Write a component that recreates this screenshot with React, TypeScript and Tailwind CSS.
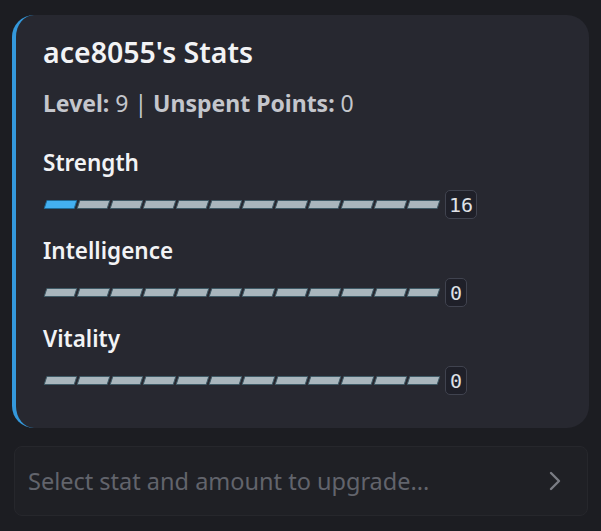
import { ChevronRight } from 'lucide-react';

interface Stat {
  name: string;
  value: number;
  filled: number;
}

const stats: Stat[] = [
  { name: 'Strength', value: 16, filled: 1 },
  { name: 'Intelligence', value: 0, filled: 0 },
  { name: 'Vitality', value: 0, filled: 0 },
];

// 12セグメントのバー
function StatBar({ filled }: { filled: number }) {
  return (
    <div className="flex gap-[2px] pl-[2px]">
      {Array.from({ length: 12 }).map((_, i) => (
        <div
          key={i}
          className={
            i < filled
              ? 'w-[31px] h-[9px] -skew-x-[18deg] rounded-[1px] border border-[#1f6a96] bg-[#43b0f1]'
              : 'w-[31px] h-[9px] -skew-x-[18deg] rounded-[1px] border border-[#3f5a66] bg-[#a9b6bd]'
          }
        />
      ))}
    </div>
  );
}

export default function App() {
  return (
    <div
      className="w-[601px] h-[531px] bg-[#1c1d22] pt-[15px] px-[12px]"
      style={{ fontFamily: '"Noto Sans", "Open Sans", sans-serif' }}
    >
      {/* 埋め込みカード */}
      <div className="w-[577px] h-[413px] rounded-[22px] border-l-[4px] border-[#3498db] bg-[#272830] pl-[27px] pt-[19px]">
        <h1 className="text-[28.5px] font-semibold leading-[36px] text-[#f2f3f5]">ace8055's Stats</h1>
        <p className="mt-[18px] text-[23px] leading-[30px] text-[#c4c6cc]">
          <span className="font-bold">Level:</span> 9 | <span className="font-bold">Unspent Points:</span> 0
        </p>
        <div className="mt-[30px] flex flex-col gap-[17px]">
          {stats.map((stat) => (
            <div key={stat.name}>
              <div className="text-[22.5px] font-semibold leading-[30px] text-[#f2f3f5]">{stat.name}</div>
              <div className="mt-[12px] flex h-[29px] items-center gap-[6px]">
                <StatBar filled={stat.filled} />
                <span
                  className="flex h-[29px] min-w-[22px] items-center justify-center rounded-[5px] border border-[#40434f] bg-[#1f2029] px-[3px] text-[20px] text-[#dfe1e6]"
                  style={{ fontFamily: '"DejaVu Sans Mono", monospace' }}
                >
                  {stat.value}
                </span>
              </div>
            </div>
          ))}
        </div>
      </div>

      {/* セレクトメニュー */}
      <div className="mt-[18px] ml-[2px] flex h-[70px] w-[574px] items-center justify-between rounded-[8px] border border-[#26272c] bg-[#1f2025] pl-[13px] pr-[16px]">
        <span className="text-[23.5px] leading-[30px] text-[#62646c]">Select stat and amount to upgrade...</span>
        <ChevronRight size={32} strokeWidth={1.8} className="text-[#7a7c84]" />
      </div>
    </div>
  );
}
